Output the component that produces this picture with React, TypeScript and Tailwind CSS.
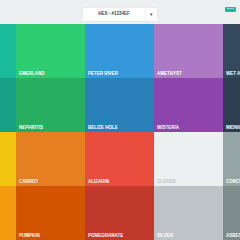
import React from "react";

type Swatch = { name: string; bg: string; text?: string };

// rows of the flat palette, first column is scrolled mostly out of view
const rows: Swatch[][] = [
  [
    { name: "TURQUOISE", bg: "bg-[#1abc9c]" },
    { name: "EMERLAND", bg: "bg-[#2ecc71]" },
    { name: "PETER RIVER", bg: "bg-[#3498db]" },
    { name: "AMETHYST", bg: "bg-[#ad79c4]" },
    { name: "WET ASPHALT", bg: "bg-[#34495e]" },
  ],
  [
    { name: "GREEN SEA", bg: "bg-[#16a085]" },
    { name: "NEPHRITIS", bg: "bg-[#27ae60]" },
    { name: "BELIZE HOLE", bg: "bg-[#2980b9]" },
    { name: "WISTERIA", bg: "bg-[#8e44ad]" },
    { name: "MIDNIGHT BLUE", bg: "bg-[#2c3e50]" },
  ],
  [
    { name: "SUNFLOWER", bg: "bg-[#f1c40f]" },
    { name: "CARROT", bg: "bg-[#e67e22]" },
    { name: "ALIZARIN", bg: "bg-[#e74c3c]" },
    { name: "CLOUDS", bg: "bg-[#ecf0f1]", text: "text-[#bdc3c7]" },
    { name: "CONCRETE", bg: "bg-[#95a5a6]" },
  ],
  [
    { name: "ORANGE", bg: "bg-[#f39c12]" },
    { name: "PUMPKIN", bg: "bg-[#d35400]" },
    { name: "POMEGRANATE", bg: "bg-[#c0392b]" },
    { name: "SILVER", bg: "bg-[#bdc3c7]" },
    { name: "ASBESTOS", bg: "bg-[#7f8c8d]" },
  ],
];

export default function App() {
  return (
    <div
      className="w-[240px] h-[240px] overflow-hidden bg-[#ecf0f1] flex flex-col"
      style={{ fontFamily: '"Liberation Sans", Arial, sans-serif' }}
    >
      <header className="h-[24px] shrink-0 flex items-start justify-center relative bg-[#ecf0f1]">
        <div className="mt-[8px] w-[74px] h-[13px] bg-white shadow-[0_0_2px_rgba(0,0,0,0.08)] flex items-center">
          <span className="flex-1 text-center text-[4.5px] font-bold text-[#34495e] leading-none">HEX - #1234EF</span>
          <span className="w-[12px] h-full border-l border-[#eef0f1] flex items-center justify-center text-[5px] text-[#34495e]">▾</span>
        </div>
        <span className="absolute right-[4px] top-[7px] w-[11px] h-[5px] bg-[#1abc9c] rounded-[1px] flex items-center justify-center text-[2.5px] font-bold text-white leading-none">
          SHIFT
        </span>
      </header>
      <div className="flex-1 overflow-hidden">
        <div className="-ml-[53px] flex flex-col">
          {rows.map((row, r) => (
            <div key={r} className="flex h-[54px]">
              {row.map((s) => (
                <div
                  key={s.name}
                  className={`${s.bg} w-[69px] shrink-0 flex flex-col justify-end pl-[3px] pb-[2px] overflow-hidden`}
                >
                  <span className={`${s.text ?? "text-white"} text-[4.5px] font-bold leading-none whitespace-nowrap`}>
                    {s.name}
                  </span>
                </div>
              ))}
            </div>
          ))}
        </div>
      </div>
    </div>
  );
}
